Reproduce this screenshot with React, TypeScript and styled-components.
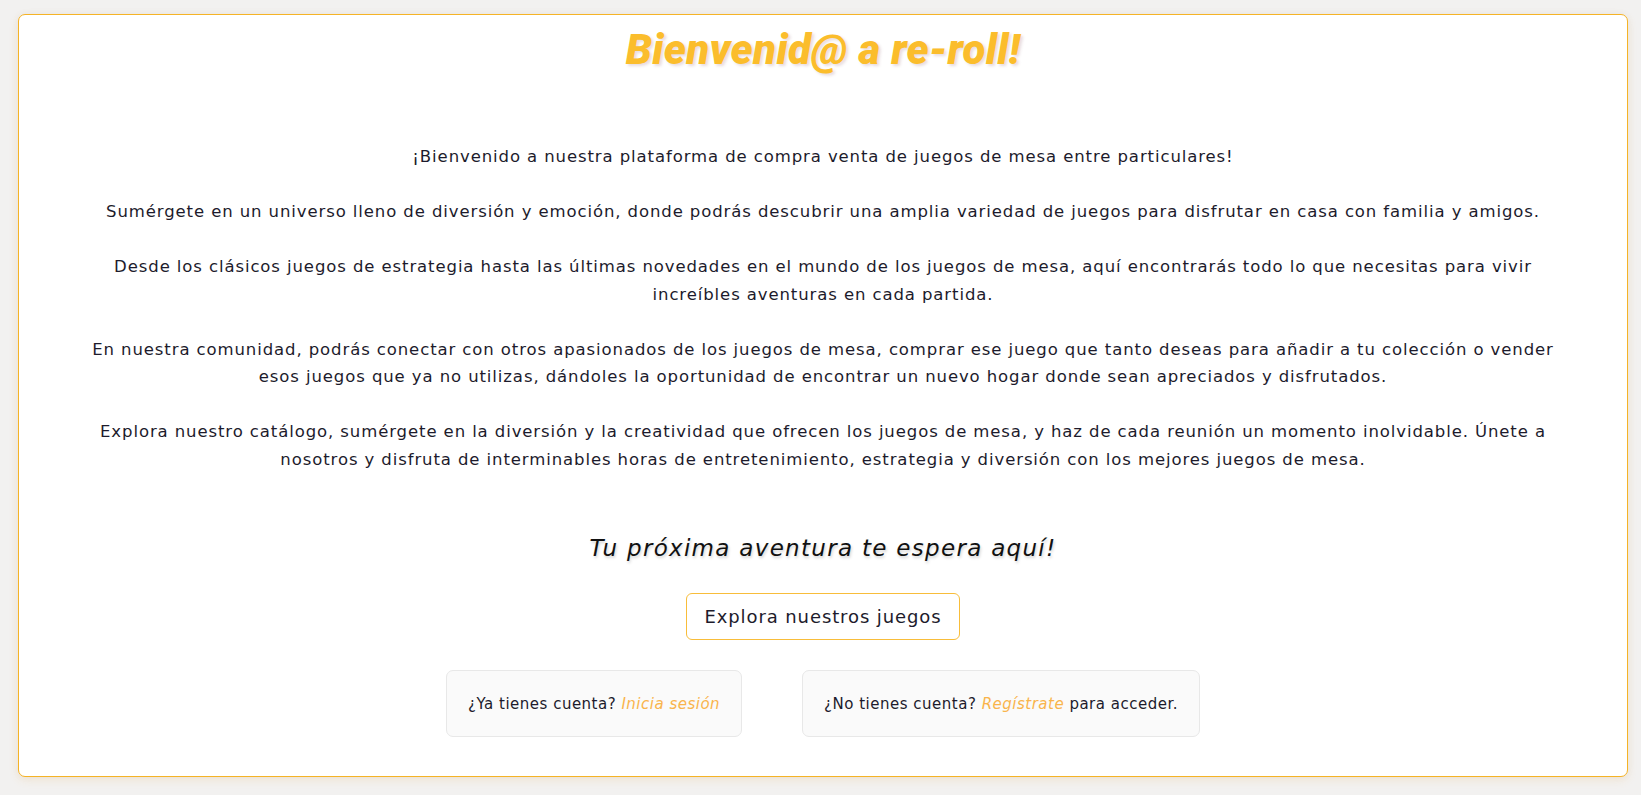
import React from "react";
import styled, { createGlobalStyle } from "styled-components";

const GlobalStyle = createGlobalStyle`
  html, body {
    margin: 0;
    padding: 0;
    background: #f2f1f0;
  }
  * { box-sizing: border-box; }
`;

const Page = styled.div`
  padding: 14px 13px 18px 18px;
  min-height: 795px;
  font-family: "DejaVu Sans", "Noto Sans", sans-serif;
  color: #1d1b2c;
`;

const Card = styled.main`
  height: 763px;
  background: #ffffff;
  border: 1px solid #f5b326;
  border-radius: 7px;
  box-shadow: 0 3px 10px rgba(245, 170, 60, 0.14), 0 0 8px rgba(0, 0, 0, 0.04);
  display: flex;
  flex-direction: column;
  align-items: center;
  padding: 8px 60px 0;
`;

const Title = styled.h1`
  margin: 0;
  font-family: Roboto, "Liberation Sans", sans-serif;
  font-weight: 900;
  font-style: italic;
  font-size: 42px;
  line-height: 53px;
  color: #fbbd2c;
  text-shadow: 2px 2px 3px rgba(120, 60, 80, 0.18);
  letter-spacing: 0.3px;
`;

const Intro = styled.section`
  margin-top: 67px;
  max-width: 1470px;
  text-align: center;
  font-size: 16.5px;
  letter-spacing: 0.9px;
  line-height: 27.5px;
`;

const Paragraph = styled.p`
  margin: 0 0 27.5px;
  &:last-child { margin-bottom: 0; }
`;

const Tagline = styled.h2`
  margin: 61px 0 0;
  font-weight: 400;
  font-style: italic;
  font-size: 23px;
  letter-spacing: 1.3px;
  line-height: 29px;
  color: #111111;
  text-shadow: 1px 2px 3px rgba(0, 0, 0, 0.18);
`;

const ExploreButton = styled.button`
  margin-top: 30px;
  height: 47px;
  padding: 0 17px;
  background: #ffffff;
  border: 1px solid #f8bd3a;
  border-radius: 6px;
  font-family: inherit;
  font-size: 18px;
  letter-spacing: 0.9px;
  color: #1d1b2c;
  cursor: pointer;
`;

const AccountRow = styled.div`
  margin-top: 30px;
  display: flex;
  gap: 60px;
`;

const AccountBox = styled.div`
  height: 67px;
  padding: 0 21px;
  display: flex;
  align-items: center;
  background: #fafafa;
  border: 1px solid #e8e8e8;
  border-radius: 7px;
  font-size: 15px;
  letter-spacing: 0.5px;
  color: #1d1b2c;
`;

const AccountLink = styled.a`
  font-style: italic;
  color: #f9b44c;
  text-decoration: none;
  cursor: pointer;
`;

export default function App() {
  return (
    <>
      <GlobalStyle />
      <Page>
        <Card>
          <Title>Bienvenid@ a re-roll!</Title>
          <Intro>
            <Paragraph>
              ¡Bienvenido a nuestra plataforma de compra venta de juegos de mesa entre particulares!
            </Paragraph>
            <Paragraph>
              Sumérgete en un universo lleno de diversión y emoción, donde podrás descubrir una amplia variedad de juegos para disfrutar en casa con familia y amigos.
            </Paragraph>
            <Paragraph>
              Desde los clásicos juegos de estrategia hasta las últimas novedades en el mundo de los juegos de mesa, aquí encontrarás todo lo que necesitas para vivir increíbles aventuras en cada partida.
            </Paragraph>
            <Paragraph>
              En nuestra comunidad, podrás conectar con otros apasionados de los juegos de mesa, comprar ese juego que tanto deseas para añadir a tu colección o vender esos juegos que ya no utilizas, dándoles la oportunidad de encontrar un nuevo hogar donde sean apreciados y disfrutados.
            </Paragraph>
            <Paragraph>
              Explora nuestro catálogo, sumérgete en la diversión y la creatividad que ofrecen los juegos de mesa, y haz de cada reunión un momento inolvidable. Únete a nosotros y disfruta de interminables horas de entretenimiento, estrategia y diversión con los mejores juegos de mesa.
            </Paragraph>
          </Intro>
          <Tagline>Tu próxima aventura te espera aquí!</Tagline>
          <ExploreButton>Explora nuestros juegos</ExploreButton>
          <AccountRow>
            <AccountBox>
              <span>
                ¿Ya tienes cuenta? <AccountLink>Inicia sesión</AccountLink>
              </span>
            </AccountBox>
            <AccountBox>
              <span>
                ¿No tienes cuenta? <AccountLink>Regístrate</AccountLink> para acceder.
              </span>
            </AccountBox>
          </AccountRow>
        </Card>
      </Page>
    </>
  );
}
